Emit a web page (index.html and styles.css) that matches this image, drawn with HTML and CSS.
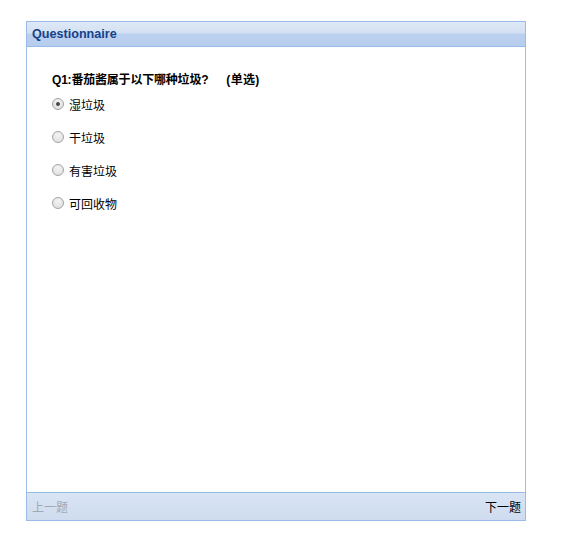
FILE: index.html
```html
<!DOCTYPE html>
<html>
<head>
<meta charset="utf-8">
<link rel="stylesheet" href="styles.css">
</head>
<body>
<div class="panel">
  <div class="panel-header"><span class="panel-title">Questionnaire</span></div>
  <div class="panel-body">
    <div class="question">Q1:番茄酱属于以下哪种垃圾?<span class="qtype">(单选)</span></div>
    <ul class="options">
      <li class="option"><span class="radio checked"></span><span class="label">湿垃圾</span></li>
      <li class="option"><span class="radio"></span><span class="label">干垃圾</span></li>
      <li class="option"><span class="radio"></span><span class="label">有害垃圾</span></li>
      <li class="option"><span class="radio"></span><span class="label">可回收物</span></li>
    </ul>
  </div>
  <div class="panel-footer">
    <span class="btn disabled">上一题</span>
    <span class="btn">下一题</span>
  </div>
</div>
</body>
</html>
```

FILE: styles.css
```css
html, body {
  margin: 0;
  padding: 0;
  background: #fff;
}
body {
  padding: 21px 0 0 26px;
  font-family: "Liberation Sans", "Noto Sans CJK SC", sans-serif;
}
.panel {
  width: 498px;
  height: 498px;
  border: 1px solid #99bbe8;
  display: flex;
  flex-direction: column;
}
.panel-header {
  height: 24px;
  border-bottom: 1px solid #99bbe8;
  background: linear-gradient(to bottom, #dfe9f6 0%, #d3e1f3 45%, #bcd1ef 50%, #b7cdee 100%);
  display: flex;
  align-items: center;
  padding-left: 5px;
}
.panel-title {
  font-weight: bold;
  font-size: 12.6px;
  color: #15428b;
}
.panel-body {
  flex: 1;
  padding: 26px 0 0 25px;
}
.question {
  font-weight: bold;
  font-size: 12px;
  color: #000;
  line-height: 14px;
  letter-spacing: -0.2px;
}
.qtype {
  margin-left: 18px;
  letter-spacing: 0.3px;
}
.options {
  list-style: none;
  margin: 9px 0 0 0;
  padding: 0;
  display: flex;
  flex-direction: column;
  gap: 17px;
}
.option {
  display: flex;
  align-items: center;
  gap: 5px;
  height: 16px;
  font-size: 12px;
  color: #000;
}
.radio {
  box-sizing: border-box;
  width: 12px;
  height: 12px;
  border-radius: 50%;
  border: 1px solid #a3a3a3;
  background: radial-gradient(circle at 50% 30%, #f4f4f4 0%, #dcdcdc 100%);
  display: flex;
  align-items: center;
  justify-content: center;
}
.radio.checked::after {
  content: "";
  width: 4px;
  height: 4px;
  border-radius: 50%;
  background: #4a4a4a;
}
.panel-footer {
  height: 27px;
  border-top: 1px solid #99bbe8;
  background: linear-gradient(to bottom, #d9e5f4 0%, #cfdcef 100%);
  display: flex;
  align-items: center;
  justify-content: space-between;
  padding: 0 4px 0 5px;
}
.btn {
  font-size: 12px;
  color: #000;
}
.btn.disabled {
  color: #a0a8b4;
}
```
